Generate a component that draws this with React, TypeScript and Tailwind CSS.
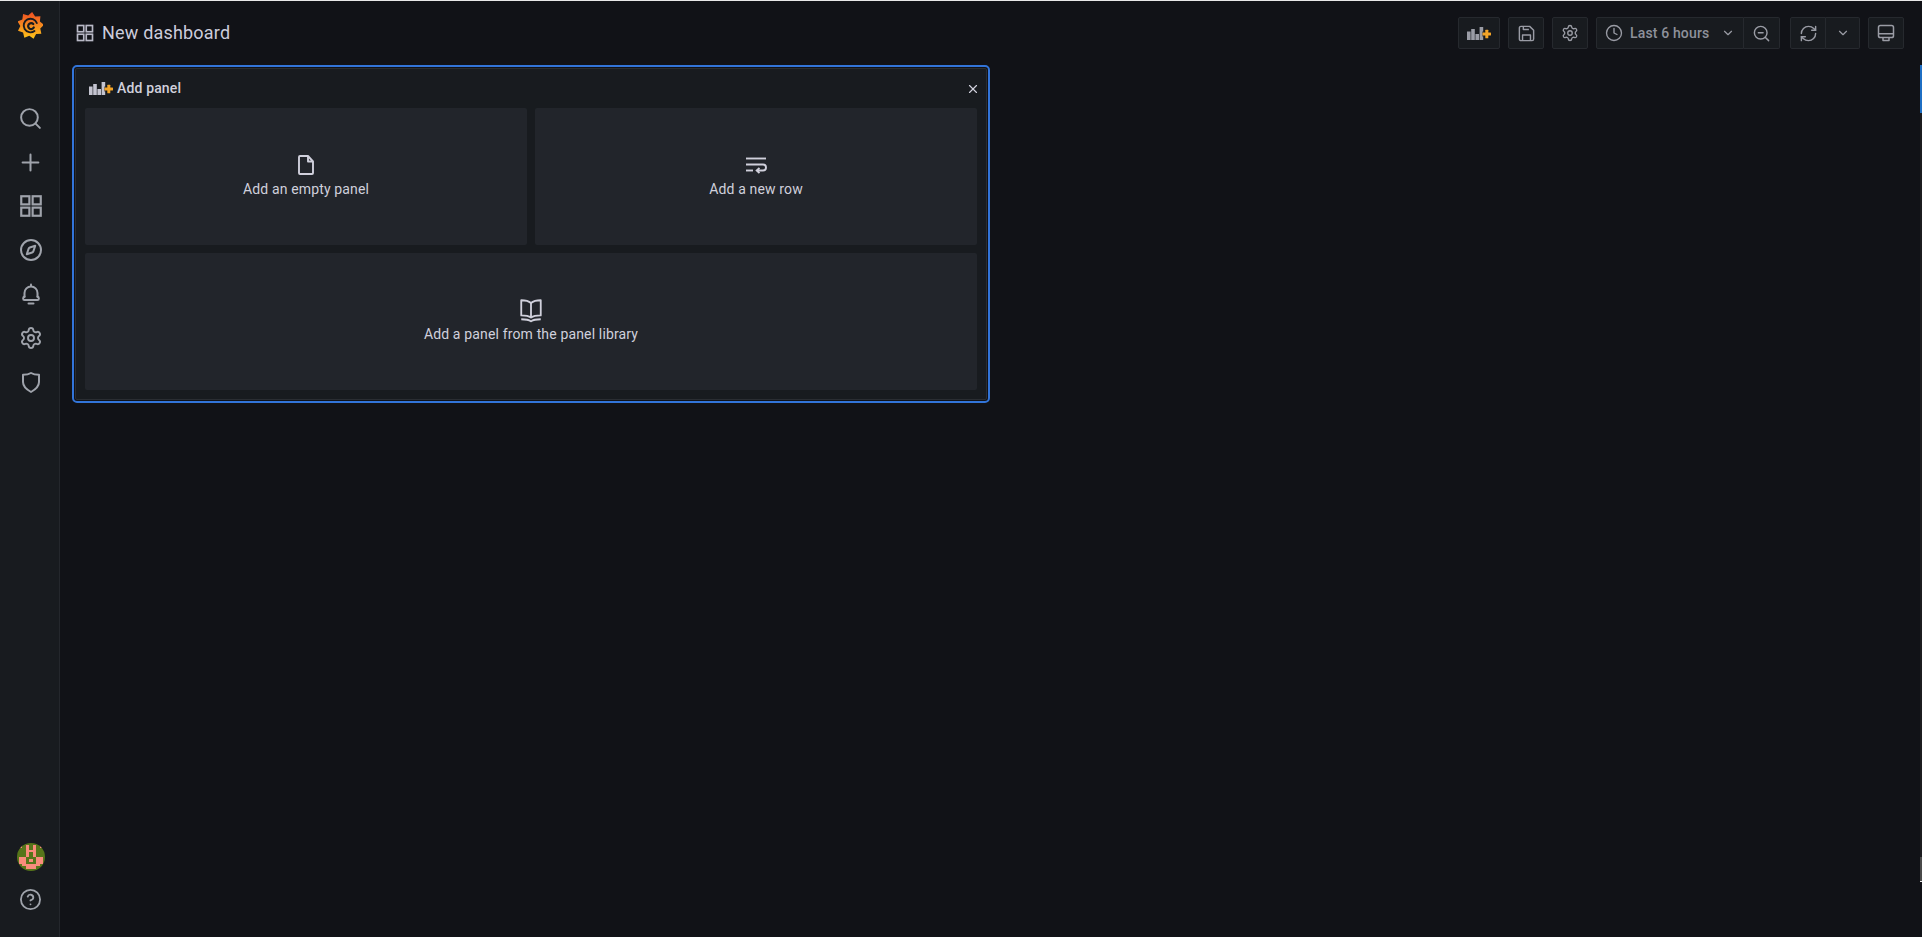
import { Search, Plus, Compass, Settings, CircleHelp, Clock, ChevronDown, ZoomOut, RefreshCw, X } from "lucide-react";

function AppsIcon({ size }: { size: number }) {
  return (
    <svg width={size} height={size} viewBox="0 0 24 24" fill="none" stroke="currentColor" strokeWidth="2">
      <rect x="3" y="3" width="7.500" height="7.500" />
      <rect x="13.500" y="3" width="7.500" height="7.500" />
      <rect x="3" y="13.500" width="7.500" height="7.500" />
      <rect x="13.500" y="13.500" width="7.500" height="7.500" />
    </svg>
  );
}

function AddPanelIcon({ className }: { className?: string }) {
  return (
    <svg width="24" height="13" viewBox="0 0 24 13" className={className}>
      <g fill="currentColor">
        <rect x="0" y="4.500" width="3.600" height="8.500" />
        <rect x="4.200" y="2" width="3.600" height="11" />
        <rect x="8.400" y="7" width="3.600" height="6" />
        <rect x="12.600" y="0" width="3.600" height="13" />
      </g>
      <rect x="15" y="4.500" width="9" height="5" fill="#111217" opacity="0.5" />
      <rect x="15.500" y="5.500" width="8.500" height="3" rx="0.500" fill="#f2a428" />
      <rect x="18.300" y="2.700" width="3" height="8.500" rx="0.500" fill="#f2a428" />
    </svg>
  );
}

function SaveIcon() {
  return (
    <svg width="19" height="19" viewBox="0 0 24 24" fill="none" stroke="currentColor" strokeWidth="1.800" strokeLinejoin="round">
      <path d="M5 3h11l5 5v11a2 2 0 0 1-2 2H5a2 2 0 0 1-2-2V5a2 2 0 0 1 2-2z" />
      <path d="M7 21v-7h10v7" />
      <path d="M8 3v4h7" />
    </svg>
  );
}

function MonitorIcon() {
  return (
    <svg width="18" height="18" viewBox="0 0 24 24" fill="none" stroke="currentColor" strokeWidth="2" strokeLinejoin="round">
      <rect x="2" y="2" width="20" height="16" rx="2.500" />
      <path d="M2 13h20" />
      <path d="M8 18v4h8v-4" />
    </svg>
  );
}

function BookIcon() {
  return (
    <svg width="26" height="26" viewBox="0 0 24 24" fill="none" stroke="currentColor" strokeWidth="1.700" strokeLinejoin="round">
      <path d="M12 5.500C10 3.800 7 3 3 3v14c4 0 7 .6 9 2 2-1.400 5-2 9-2V3c-4 0-7 .8-9 2.500z" />
      <path d="M12 5.500V19" />
      <path d="M3 20.500c4 0 7 .5 9 2 2-1.500 5-2 9-2" />
    </svg>
  );
}

function FileIcon() {
  return (
    <svg width="24" height="24" viewBox="0 0 24 24" fill="none" stroke="currentColor" strokeWidth="1.900" strokeLinejoin="round">
      <path d="M6 3h8l5 5.500V20a1 1 0 0 1-1 1H6a1 1 0 0 1-1-1V4a1 1 0 0 1 1-1z" />
      <path d="M14 3v5.500h5" />
    </svg>
  );
}

function WrapIcon() {
  return (
    <svg width="24" height="24" viewBox="0 0 24 24" fill="none" stroke="currentColor" strokeWidth="1.900">
      <path d="M2 5.500h20" />
      <path d="M2 11.500h17a3 3 0 0 1 0 6h-6" />
      <path d="M15.500 15l-2.800 2.500 2.800 2.500" />
      <path d="M2 17.500h7" />
    </svg>
  );
}

function BellIcon() {
  return (
    <svg width="24" height="24" viewBox="0 0 24 24" fill="none" stroke="currentColor" strokeWidth="2" strokeLinejoin="round" strokeLinecap="round">
      <path d="M12 2.500v1.500" />
      <path d="M5.500 15v-4a6.500 6.500 0 0 1 13 0v4" />
      <path d="M5.500 14.500c-1.800.5-1.800 3.500 0 3.500h13c1.800 0 1.800-3 0-3.500" />
      <path d="M9.500 21.500h5" />
    </svg>
  );
}

function ShieldIcon() {
  return (
    <svg width="24" height="24" viewBox="0 0 24 24" fill="none" stroke="currentColor" strokeWidth="2" strokeLinejoin="round">
      <path d="M12 3c2 1.200 5 1.800 8 1.800V12c0 4.500-3.500 7.500-8 10-4.500-2.500-8-5.500-8-10V4.800c3 0 6-.6 8-1.800z" />
    </svg>
  );
}

// nine tooth gear outline for the logo
const gearPath = Array.from({ length: 18 }, (_, i) => {
  const r = i % 2 === 0 ? 13.6 : 10.2;
  const a = (i / 18) * Math.PI * 2 - Math.PI / 2 + 0.12;
  return `${i === 0 ? "M" : "L"}${(12.5 + r * Math.cos(a)).toFixed(2)} ${(13.5 + r * Math.sin(a)).toFixed(2)}`;
}).join(" ") + "z";

function GrafanaLogo() {
  return (
    <svg width="25" height="27" viewBox="0 0 25 27">
      <defs>
        <linearGradient id="grafana-grad" x1="0" y1="1" x2="0" y2="0">
          <stop offset="0" stopColor="#fcc419" />
          <stop offset="0.5" stopColor="#f68a1f" />
          <stop offset="1" stopColor="#ee4d23" />
        </linearGradient>
      </defs>
      <path fill="url(#grafana-grad)" d={gearPath} />
      <path d="M18.800 11A6.800 6.800 0 1 0 16.500 19" fill="none" stroke="#1a1b1f" strokeWidth="1.900" strokeLinecap="round" />
      <path d="M15.800 15.500a3 3 0 1 1-.5-3.500" fill="none" stroke="#1a1b1f" strokeWidth="2.200" strokeLinecap="round" />
    </svg>
  );
}

// rough copy of the identicon, 12 x 12 cells
const avatarRows = [
  "000000000000",
  "010010010010",
  "000010010000",
  "000011110000",
  "000010010000",
  "000010010000",
  "011100001110",
  "011101101110",
  "011100001110",
  "001111111100",
  "000011110000",
  "000000000000",
];

function Avatar() {
  return (
    <svg width="28" height="28" viewBox="0 0 12 12" className="rounded-full" shapeRendering="crispEdges">
      <rect width="12" height="12" fill="#56751a" />
      {avatarRows.map((row, y) =>
        row.split("").map((c, x) => (c === "1" ? <rect key={`${x}-${y}`} x={x} y={y} width="1" height="1" fill="#f98c7c" /> : null))
      )}
    </svg>
  );
}

function NavItem({ children }: { children: React.ReactNode }) {
  return <div className="flex h-11 w-full items-center justify-center text-[#9fa3ab]">{children}</div>;
}

function ToolButton({ children, className = "" }: { children: React.ReactNode; className?: string }) {
  return (
    <button
      type="button"
      className={`flex h-8 items-center justify-center border border-[#26292e] bg-[#181b1f] text-[#9a9ca5] ${className}`}
    >
      {children}
    </button>
  );
}

function AddCard({ icon, label, className = "" }: { icon: React.ReactNode; label: string; className?: string }) {
  return (
    <div className={`flex h-[137px] flex-col items-center rounded-[2px] bg-[#22252b] pt-[45px] text-[#d0d0dc] ${className}`}>
      <div className="flex h-6 items-center justify-center">{icon}</div>
      <div className="text-[14px] leading-[24px] tracking-[0.01071em]">{label}</div>
    </div>
  );
}

export default function App() {
  return (
    <div className="relative flex h-[937px] w-full flex-col overflow-hidden bg-[#111217] font-['Roboto',sans-serif]">
      <div className="h-px w-full shrink-0 bg-[#e8e8e8]" />
      <div className="flex min-h-0 flex-1">
        <aside className="flex w-[60px] shrink-0 flex-col items-center border-r border-[#24272c] bg-[#181b1f] pl-[2px]">
          <div className="mt-[11px] flex h-[27px] items-center justify-center">
            <GrafanaLogo />
          </div>
          <div className="mt-[57px] flex w-full flex-col">
            <NavItem><Search size={25} strokeWidth={1.9} /></NavItem>
            <NavItem><Plus size={27} strokeWidth={1.8} /></NavItem>
            <NavItem><AppsIcon size={26} /></NavItem>
            <NavItem><Compass size={24} strokeWidth={2} /></NavItem>
            <NavItem><BellIcon /></NavItem>
            <NavItem><Settings size={24} strokeWidth={1.9} /></NavItem>
            <NavItem><ShieldIcon /></NavItem>
          </div>
          <div className="mt-auto flex flex-col items-center pb-[26px]">
            <Avatar />
            <div className="mt-[17px] text-[#9fa3ab]">
              <CircleHelp size={23} strokeWidth={1.9} />
            </div>
          </div>
        </aside>
        <main className="flex min-w-0 flex-1 flex-col">
          <header className="flex h-[64px] shrink-0 items-start pr-[18px] pt-[16px]">
            <div className="flex h-8 items-center pl-[15px] text-[#ccccdc]">
              <span className="text-[#b8b8c6]"><AppsIcon size={20} /></span>
              <span className="ml-[7px] text-[18px] font-normal leading-6 tracking-[0.01071em]">New dashboard</span>
            </div>
            <div className="ml-auto flex items-center">
              <ToolButton className="w-[42px] rounded-[2px]"><AddPanelIcon className="text-[#9a9ca5]" /></ToolButton>
              <ToolButton className="ml-2 w-9 rounded-[2px]"><SaveIcon /></ToolButton>
              <ToolButton className="ml-2 w-9 rounded-[2px]"><Settings size={18} strokeWidth={1.8} /></ToolButton>
              <ToolButton className="ml-2 w-[148px] justify-start rounded-l-[2px] pl-2 text-[14px] font-medium tracking-[0.01071em]">
                <Clock size={18} strokeWidth={1.8} />
                <span className="ml-[7px] text-[#8e919b]">Last 6 hours</span>
                <ChevronDown size={14} strokeWidth={2} className="ml-3" />
              </ToolButton>
              <ToolButton className="w-9 rounded-r-[2px] border-l-0"><ZoomOut size={19} strokeWidth={1.8} /></ToolButton>
              <ToolButton className="ml-[10px] w-9 rounded-l-[2px]"><RefreshCw size={19} strokeWidth={1.8} /></ToolButton>
              <ToolButton className="w-[34px] rounded-r-[2px] border-l-0"><ChevronDown size={14} strokeWidth={2} /></ToolButton>
              <ToolButton className="ml-2 w-9 rounded-[2px]"><MonitorIcon /></ToolButton>
            </div>
          </header>
          <div className="pl-3">
            <section className="h-[338px] w-[918px] rounded-[5px] border-2 border-[#3274d9] p-px">
              <div className="h-full rounded-[2px] border border-[#2a2d32] bg-[#181b1f] px-[9px]">
                <div className="flex h-[39px] items-center text-[#d0d0dc]">
                  <AddPanelIcon className="ml-[4px] text-[#c4c4d0]" />
                  <span className="ml-[4px] text-[14px] font-medium tracking-[0.01071em]">Add panel</span>
                  <X size={14} strokeWidth={2} className="ml-auto mr-[-3px]" />
                </div>
                <div className="grid grid-cols-2 gap-2">
                  <AddCard icon={<FileIcon />} label="Add an empty panel" />
                  <AddCard icon={<WrapIcon />} label="Add a new row" />
                  <AddCard icon={<BookIcon />} label="Add a panel from the panel library" className="col-span-2" />
                </div>
              </div>
            </section>
          </div>
        </main>
      </div>
      {/* scrollbar slivers at the window edge */}
      <div className="absolute right-0 top-[65px] h-12 w-[2px] bg-[#1f6fc4]" />
      <div className="absolute right-0 top-[113px] h-[744px] w-[2px] bg-[#1c1c1f]" />
      <div className="absolute right-0 top-[857px] h-6 w-[2px] bg-[#4a4a4a]" />
      <div className="absolute right-0 top-[881px] h-px w-[2px] bg-[#e8e8e8]" />
    </div>
  );
}
